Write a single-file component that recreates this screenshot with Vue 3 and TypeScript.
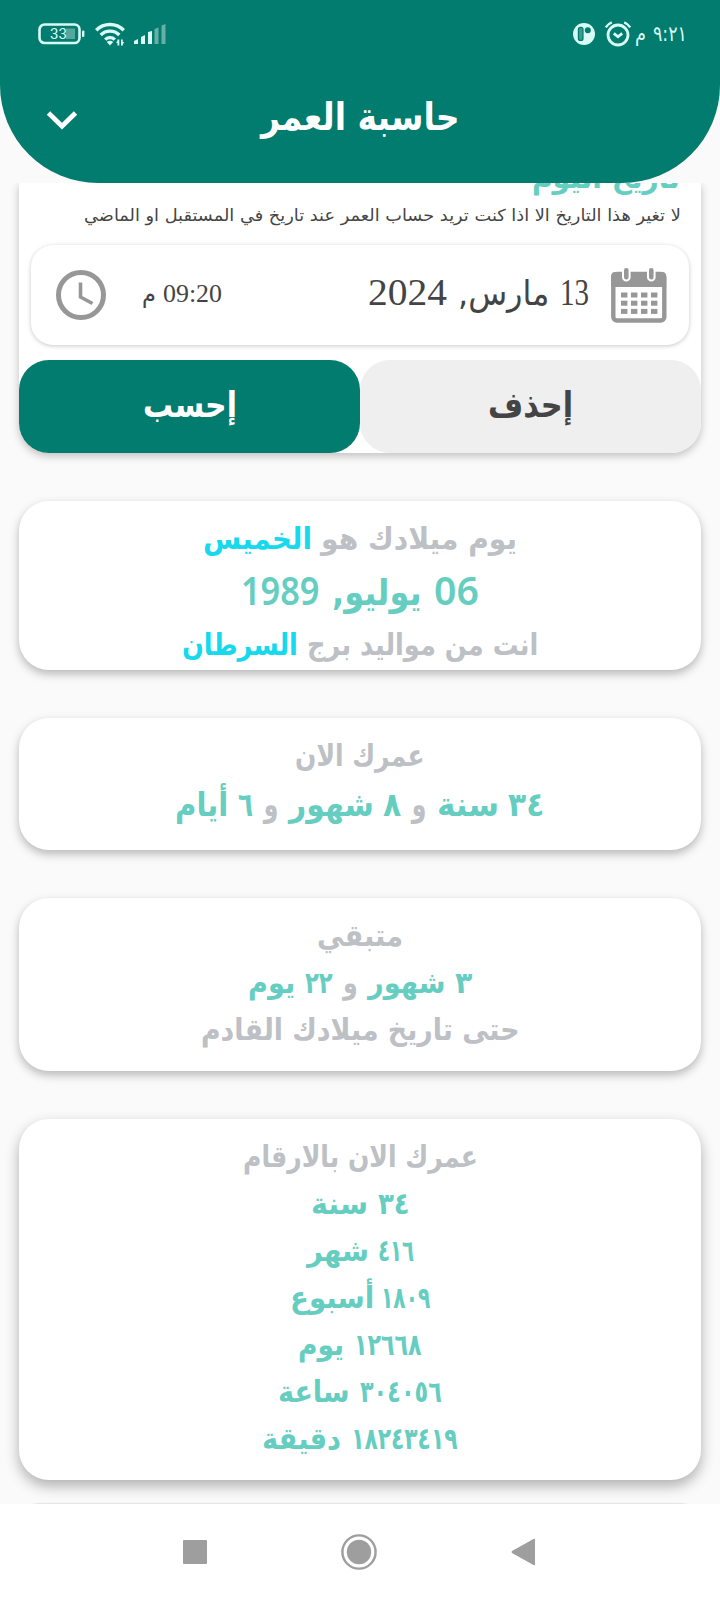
<script setup lang="ts">
import { defineComponent, h, onMounted, ref } from 'vue'

interface Seg { t: string; w: number; c?: string }
interface Line { h: number; gap?: number; k?: string; segs: Seg[] }

// A run of text condensed or widened so that it fills exactly `w` pixels.
const Fit = defineComponent({
  props: { t: { type: String, required: true }, w: { type: Number, required: true } },
  setup(props) {
    const el = ref<HTMLElement | null>(null)
    const k = ref(1)
    onMounted(() => { if (el.value) k.value = props.w / el.value.offsetWidth })
    return () => h('span', { class: 'fit', style: { width: props.w + 'px' } }, [
      h('span', { ref: el, class: 'fit-in', style: { transform: `scaleX(${k.value})` } }, props.t),
    ])
  },
})

const cards: { cls: string; lines: Line[] }[] = [
  { cls: 'birth', lines: [
    { h: 52, gap: 10, segs: [{ t: 'يوم ميلادك هو', w: 196 }, { t: 'الخميس', w: 109, c: 'cyan' }] },
    { h: 54, gap: 12, k: 'big', segs: [{ t: '06', w: 45, c: 'teal num' }, { t: 'يوليو,', w: 90, c: 'teal' }, { t: '1989', w: 79, c: 'teal num' }] },
    { h: 52, gap: 10, segs: [{ t: 'انت من مواليد برج', w: 231 }, { t: 'السرطان', w: 116, c: 'cyan' }] },
  ] },
  { cls: 'age', lines: [
    { h: 47, segs: [{ t: 'عمرك الان', w: 129 }] },
    { h: 52, gap: 10, k: 'mid', segs: [
      { t: '٣٤', w: 36, c: 'teal' }, { t: 'سنة', w: 62, c: 'teal' }, { t: 'و', w: 15 },
      { t: '٨', w: 18, c: 'teal' }, { t: 'شهور', w: 85, c: 'teal' }, { t: 'و', w: 15 },
      { t: '٦', w: 15, c: 'teal' }, { t: 'أيام', w: 53, c: 'teal' }] },
  ] },
  { cls: 'left', lines: [
    { h: 47, segs: [{ t: 'متبقي', w: 86 }] },
    { h: 47, gap: 10, segs: [
      { t: '٣', w: 17, c: 'teal' }, { t: 'شهور', w: 77, c: 'teal' }, { t: 'و', w: 15 },
      { t: '٢٢', w: 28, c: 'teal' }, { t: 'يوم', w: 47, c: 'teal' }] },
    { h: 47, segs: [{ t: 'حتى تاريخ ميلادك القادم', w: 319 }] },
  ] },
  { cls: 'numbers', lines: [
    { h: 47, segs: [{ t: 'عمرك الان بالارقام', w: 235 }] },
    { h: 47, gap: 10, segs: [{ t: '٣٤', w: 32, c: 'teal' }, { t: 'سنة', w: 57, c: 'teal' }] },
    { h: 47, gap: 9, segs: [{ t: '٤١٦', w: 36, c: 'teal' }, { t: 'شهر', w: 62, c: 'teal' }] },
    { h: 47, gap: 7, segs: [{ t: '١٨٠٩', w: 49, c: 'teal' }, { t: 'أسبوع', w: 84, c: 'teal' }] },
    { h: 47, gap: 10, segs: [{ t: '١٢٦٦٨', w: 68, c: 'teal' }, { t: 'يوم', w: 46, c: 'teal' }] },
    { h: 47, gap: 10, segs: [{ t: '٣٠٤٠٥٦', w: 82, c: 'teal' }, { t: 'ساعة', w: 71, c: 'teal' }] },
    { h: 47, gap: 10, segs: [{ t: '١٨٢٤٣٤١٩', w: 106, c: 'teal' }, { t: 'دقيقة', w: 79, c: 'teal' }] },
  ] },
]
const cols = [0, 1, 2, 3]
const rows = [0, 1, 2]
</script>

<template>
  <div class="screen" dir="rtl">
    <header class="top">
      <div class="status">
        <div class="st-right">
          <span class="clock"><Fit t="٩:٢١" :w="34" /><Fit t="م" :w="11" /></span>
          <svg width="28" height="26" viewBox="0 0 28 26" fill="none" stroke="#d8fbf5">
            <circle cx="14" cy="14" r="10" stroke-width="2.8" />
            <path d="M1.8 6.4A13 13 0 0 1 7.8 1.4M20.2 1.4A13 13 0 0 1 26.2 6.4" stroke-width="2.4" />
            <path d="M9.8 12.4L14 15.8L18.2 12.4" stroke-width="2.8" />
          </svg>
          <svg width="22" height="22" viewBox="0 0 22 22">
            <circle cx="11" cy="11" r="11" fill="#d8fbf5" />
            <rect x="5.4" y="4.4" width="4.6" height="13" rx="2" fill="#3c9b90" stroke="#027c6f" stroke-width="1.2" />
            <circle cx="14.8" cy="7.2" r="3" fill="#027c6f" />
          </svg>
        </div>
        <div class="st-left">
          <svg width="32" height="22" viewBox="0 0 32 22">
            <g fill="#d8fbf5"><path d="M0 21v-3l4-2v5zM7 21v-7l4-2v9zM14 21V9l4-1v13z" /></g>
            <g fill="#67b0a7"><path d="M20.5 21V6l4-1.5V21zM27.5 21V2.5l4-1.5v20z" /></g>
          </svg>
          <svg width="30" height="24" viewBox="0 0 30 24" fill="none" stroke="#d8fbf5" stroke-width="3.4">
            <path d="M1.2 8.2a19.5 19.5 0 0 1 27.6 0M5.7 13a13.2 13.2 0 0 1 18.6 0M10.2 17.6a6.8 6.8 0 0 1 9.6 0" />
            <path d="M11.8 20Q15 17.6 18.2 20L15 23.6z" fill="#d8fbf5" stroke="none" />
            <path d="M23.4 17.5v6M26.9 17.5v6" stroke-width="1.8" />
            <path d="M21 21l2.4-3.4V21zM29.3 20l-2.4 3.4V20z" fill="#d8fbf5" stroke="none" />
          </svg>
          <svg width="48" height="22" viewBox="0 0 48 22">
            <rect x="28" y="5.5" width="9" height="10.5" fill="#53a79c" />
            <rect x="1.5" y="1.5" width="40" height="18.5" rx="5" fill="none" stroke="#d8fbf5" stroke-width="2.6" />
            <rect x="44" y="7.5" width="2.4" height="6.5" rx="1" fill="#d8fbf5" />
            <text x="20.5" y="15.9" text-anchor="middle" class="bat">33</text>
          </svg>
        </div>
      </div>
      <div class="titlebar">
        <svg class="chev" width="32" height="22" viewBox="0 0 32 22"><path d="M2.5 3L16 16.2L29.5 3" fill="none" stroke="#fff" stroke-width="4.8" /></svg>
        <h1><Fit t="حاسبة العمر" :w="199" /></h1>
      </div>
    </header>

    <main class="content">
      <section class="form">
        <div class="today"><Fit t="تاريخ اليوم" :w="148" /></div>
        <div class="note"><Fit t="لا تغير هذا التاريخ الا اذا كنت تريد حساب العمر عند تاريخ في المستقبل او الماضي" :w="597" /></div>
        <div class="field">
          <svg width="56" height="56" viewBox="0 0 56 56">
            <rect x="2.3" y="7" width="51" height="46.5" rx="3.5" fill="#fff" stroke="#979797" stroke-width="4.4" />
            <path d="M0.2 20V9a4 4 0 0 1 4-4h47a4 4 0 0 1 4 4v11z" fill="#979797" />
            <g fill="#979797" stroke="#fff" stroke-width="2"><rect x="12" y="0" width="6.6" height="13.5" rx="3.3" /><rect x="37" y="0" width="6.6" height="13.5" rx="3.3" /></g>
            <template v-for="r in rows" :key="r">
              <rect v-for="c in cols" :key="c" :x="10 + c * 10" :y="25.5 + r * 8.2" width="6.4" height="5" fill="#979797" />
            </template>
          </svg>
          <div class="date">
            <Fit class="lat" t="13" :w="29" /><Fit t="مارس," :w="91" /><Fit class="lat" t="2024" :w="79" />
          </div>
          <div class="time">
            <Fit class="lat" t="09:20" :w="59" /><Fit t="م" :w="14" />
          </div>
          <svg width="50" height="50" viewBox="0 0 50 50" fill="none" stroke="#979797">
            <circle cx="25" cy="25" r="22.5" stroke-width="5" />
            <path d="M24.5 12.5V27L36.5 33.5" stroke-width="3.6" />
          </svg>
        </div>
        <div class="buttons">
          <button class="del"><Fit t="إحذف" :w="85" /></button>
          <button class="calc"><Fit t="إحسب" :w="94" /></button>
        </div>
      </section>

      <section v-for="card in cards" :key="card.cls" class="card" :class="card.cls">
        <p v-for="(l, i) in card.lines" :key="i" :class="l.k" :style="{ height: l.h + 'px', lineHeight: l.h + 'px', columnGap: (l.gap ?? 0) + 'px' }">
          <Fit v-for="(s, j) in l.segs" :key="j" :class="s.c" :t="s.t" :w="s.w" />
        </p>
      </section>
      <section class="card next"></section>
    </main>

    <nav class="nav">
      <svg width="24" height="28" viewBox="0 0 24 28"><path d="M22 1.2Q24 0 24 2V26Q24 28 22 26.8L1 15Q0 14 1 13z" fill="#9e9e9e" /></svg>
      <svg width="36" height="36" viewBox="0 0 36 36"><circle cx="18" cy="18" r="16.6" fill="none" stroke="#9e9e9e" stroke-width="2.4" /><circle cx="18" cy="18" r="12.2" fill="#9e9e9e" /></svg>
      <svg width="24" height="24" viewBox="0 0 24 24"><rect width="24" height="24" rx="1" fill="#9e9e9e" /></svg>
    </nav>
  </div>
</template>

<style>
body { margin: 0; background: #fafafa; }
.fit { display: inline-block; white-space: nowrap; flex: none; text-align: right; }
.fit-in { display: inline-block; transform-origin: right center; }
</style>

<style scoped>
.screen {
  width: 720px; height: 1600px; overflow: hidden; display: flex; flex-direction: column;
  background: #fafafa; font-family: "DejaVu Sans", sans-serif; color: #444;
}
.top { flex: none; height: 183px; background: #027c6f; border-radius: 0 0 98px 98px; }
.status { height: 70px; display: flex; justify-content: space-between; padding: 0 33px 0 38px; box-sizing: border-box; }
.st-right { display: flex; align-items: center; gap: 9px; height: 68px; }
.st-left { display: flex; align-items: center; gap: 9px; height: 68px; }
.clock { display: flex; gap: 7px; color: #d8fbf5; font-size: 21px; margin-left: -6px; }
.bat { font: 400 15px Roboto, sans-serif; fill: #d8fbf5; }
.titlebar { position: relative; height: 96px; display: flex; justify-content: center; }
.chev { position: absolute; left: 46px; top: 40px; }
h1 { margin: 0; font-size: 38px; line-height: 95px; font-weight: 700; color: #fff; }

.content { flex: none; height: 1321px; overflow: hidden; padding: 0 19px; }
.form { height: 270px; background: #fff; border-radius: 0 0 30px 30px; box-shadow: 0 3px 9px rgba(0,0,0,.24); }
.today {
  height: 17px; padding: 0 21px; display: flex; align-items: flex-end; overflow: hidden;
  line-height: 36px; font-size: 30px; font-weight: 700; color: #66cdc1;
}
.today .fit { margin-bottom: 4px; }
.note { height: 45px; padding: 0 20px; font-size: 16.5px; line-height: 32px; }
.field {
  box-sizing: border-box; height: 100px; margin: 0 12px; border-radius: 22px; background: #fff;
  box-shadow: 0 1px 4px rgba(0,0,0,.22); display: flex; align-items: center; padding: 0 22px 0 25px;
}
.date { display: flex; align-items: baseline; gap: 11px; margin: 0 22px 4px auto; font-size: 34px; line-height: 44px; }
.date .lat { font-family: "Liberation Serif", serif; font-size: 37px; }
.time { display: flex; align-items: baseline; gap: 7px; margin: 0 0 2px 36px; font-size: 24px; line-height: 30px; }
.time .lat { font-family: "Liberation Serif", serif; font-size: 25px; }
.buttons { display: flex; margin-top: 15px; height: 93px; }
button { flex: 1; border: 0; padding: 0 0 3px; border-radius: 30px; font: 700 35px/76px "DejaVu Sans", sans-serif; }
button .fit { vertical-align: top; }
.del { background: #efefef; color: #444; }
.calc { background: #027c6f; color: #fff; }

.card { box-sizing: border-box; margin-top: 48px; border-radius: 30px; background: #fff; box-shadow: 0 4px 10px rgba(0,0,0,.27); font-size: 30px; font-weight: 700; color: #bdc0c4; }
.birth { height: 169px; padding-top: 12px; }
.age { height: 132px; padding-top: 14px; }
.left { height: 173px; padding-top: 14px; }
.numbers { height: 361px; padding-top: 14px; box-shadow: 0 6px 14px rgba(0,0,0,.3); }
.next { margin-top: 24px; height: 40px; box-shadow: 0 0 2px rgba(0,0,0,.3); }
p { margin: 0; display: flex; justify-content: center; align-items: baseline; }
.big { font-size: 36px; }
.big .fit { margin-top: -2px; }
.mid { font-size: 33px; }
.teal { color: #66cdc1; }
.cyan { color: #16d9ee; }
.num { font-family: "Noto Sans", sans-serif; font-weight: 600; font-size: 40px; }

.nav { flex: none; height: 96px; background: #fff; display: flex; align-items: center; justify-content: space-between; padding: 0 185px 0 183px; }
.nav svg:nth-child(2) { margin-left: -1px; }
</style>
